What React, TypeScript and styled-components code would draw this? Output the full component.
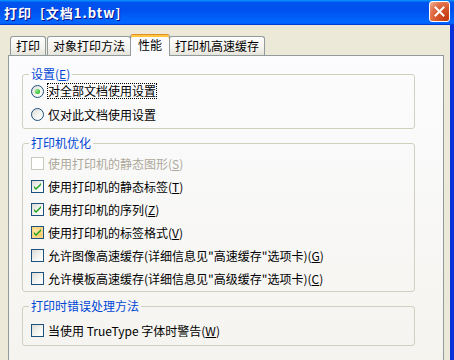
import * as React from "react";
import { FC } from "react";
import styled, { createGlobalStyle, css } from "styled-components";

const GlobalStyle = createGlobalStyle`
  html, body {
    margin: 0;
    padding: 0;
    background: #ece9d8;
  }
  body {
    font-family: "Noto Sans CJK SC", "Noto Sans", sans-serif;
    font-size: 12px;
    color: #000;
  }
`;

const Window = styled.div`
  width: 454px;
  height: 360px;
  overflow: hidden;
  background: #ece9d8;
  display: flex;
  flex-direction: column;
`;

const TitleBar = styled.div`
  height: 25px;
  flex-shrink: 0;
  display: flex;
  align-items: center;
  justify-content: space-between;
  padding: 0 4px 0 4px;
  background: linear-gradient(
    to bottom,
    #0997ff 0%,
    #0053ee 10%,
    #0050ee 40%,
    #0066ff 86%,
    #0066ff 92%,
    #005bff 95%,
    #003dd7 96%,
    #003dd7 100%
  );
`;

const Title = styled.div`
  color: #fff;
  font-weight: bold;
  font-size: 13px;
  letter-spacing: 1px;
  text-shadow: 1px 1px #0f1089;
  white-space: pre;
  margin-top: -1px;
`;

const CloseButton = styled.div`
  width: 19px;
  height: 19px;
  border: 1px solid #fff;
  border-radius: 3px;
  margin-top: -3px;
  display: flex;
  align-items: center;
  justify-content: center;
  background: radial-gradient(
    circle at 85% 85%,
    #c23a10 0%,
    #d9582c 45%,
    #e27650 70%,
    #f0ad92 95%
  );
`;

const Client = styled.div`
  flex: 1;
  border-right: 4px solid #0831d9;
  padding: 8px 6px 0 8px;
  display: flex;
  flex-direction: column;
`;

const TabStrip = styled.div`
  display: flex;
  align-items: flex-end;
  height: 23px;
  padding-left: 2px;
  position: relative;
  z-index: 1;
  margin-bottom: -1px;
`;

const Tab = styled.div<{ $active?: boolean }>`
  height: 18px;
  line-height: 18px;
  padding: 0 5px;
  border: 1px solid #919b9c;
  border-bottom: none;
  border-radius: 3px 3px 0 0;
  margin-right: 1px;
  white-space: nowrap;
  background: linear-gradient(to bottom, #fefefe 0%, #f4f3ee 60%, #e6e4da 100%);
  margin-bottom: 1px;
  ${(p) =>
    p.$active &&
    css`
      height: 21px;
      line-height: 20px;
      margin: 0 -1px 0 -2px;
      padding: 0 7px;
      background: #fcfcfe;
      border-top: 1px solid #e68b2c;
      box-shadow: inset 0 2px #ffc83c;
      margin-bottom: 0;
    `}
`;

const Panel = styled.div`
  height: 320px;
  border: 1px solid #919b9c;
  background: linear-gradient(to bottom, #fcfcfe 0%, #f4f3ee 100%);
  padding: 12px 0 0 13px;
  display: flex;
  flex-direction: column;
`;

const Group = styled.fieldset<{ $gap?: number }>`
  width: 385px;
  margin: 0 0 ${(p) => p.$gap ?? 0}px 0;
  padding: 0 0 0 6px;
  border: 1px solid #d0d0bf;
  border-radius: 3px;
  min-width: 0;
`;

const Legend = styled.legend`
  color: #0046d5;
  padding: 0 2px;
  line-height: 12px;
  height: 12px;
`;

const Items = styled.div<{ $top: number; $bottom: number }>`
  display: flex;
  flex-direction: column;
  gap: 3px;
  padding: ${(p) => p.$top}px 0 ${(p) => p.$bottom}px 2px;
`;

const Row = styled.label<{ $disabled?: boolean }>`
  display: flex;
  align-items: center;
  gap: 4px;
  height: 20px;
  white-space: nowrap;
  color: ${(p) => (p.$disabled ? "#aca899" : "#000")};
`;

const Box = styled.span<{ $hot?: boolean; $disabled?: boolean }>`
  width: 11px;
  height: 11px;
  flex-shrink: 0;
  border: 1px solid ${(p) => (p.$disabled ? "#cac8bb" : "#1c5180")};
  display: flex;
  align-items: center;
  justify-content: center;
  background: ${(p) =>
    p.$disabled
      ? "#fff"
      : "linear-gradient(135deg, #dcdcd7 0%, #f6f6f3 60%, #ffffff 100%)"};
  ${(p) =>
    p.$hot &&
    css`
      background: linear-gradient(135deg, #fff0cf 0%, #fbd783 60%, #f8b330 100%);
      box-shadow: inset 0 0 0 2px #fbd783;
    `}
`;

const Radio = styled.span`
  width: 11px;
  height: 11px;
  flex-shrink: 0;
  border: 1px solid #1c5180;
  border-radius: 50%;
  display: flex;
  align-items: center;
  justify-content: center;
  background: linear-gradient(135deg, #dcdcd7 0%, #f6f6f3 60%, #ffffff 100%);
`;

const Dot = styled.span`
  width: 5px;
  height: 5px;
  border-radius: 50%;
  background: radial-gradient(circle at 35% 35%, #a2e79f 0%, #55d551 40%, #21a121 100%);
`;

const Focus = styled.span`
  outline: 1px dotted #000;
  outline-offset: 0;
  line-height: 14px;
`;

const Check: FC = () => (
  <svg width="9" height="9" viewBox="0 0 9 9">
    <path d="M1 4 L3 6 L8 1 L8 3 L3 8 L1 6 Z" fill="#21a121" />
  </svg>
);

const Acc: FC<{ k: string }> = ({ k }) => (
  <>
    (<u>{k}</u>)
  </>
);

type CheckItem = {
  label: string;
  key: string;
  checked?: boolean;
  disabled?: boolean;
  hot?: boolean;
};

const optimizeItems: CheckItem[] = [
  { label: "使用打印机的静态图形", key: "S", disabled: true },
  { label: "使用打印机的静态标签", key: "T", checked: true },
  { label: "使用打印机的序列", key: "Z", checked: true },
  { label: "使用打印机的标签格式", key: "V", checked: true, hot: true },
  { label: '允许图像高速缓存(详细信息见"高速缓存"选项卡)', key: "G" },
  { label: '允许模板高速缓存(详细信息见"高级缓存"选项卡)', key: "C" },
];

const CheckRow: FC<{ item: CheckItem }> = ({ item }) => (
  <Row $disabled={item.disabled}>
    <Box $disabled={item.disabled} $hot={item.hot}>
      {item.checked && <Check />}
    </Box>
    <span>
      {item.label}
      <Acc k={item.key} />
    </span>
  </Row>
);

const App: FC = () => (
  <>
    <GlobalStyle />
    <Window>
      <TitleBar>
        <Title>打印  [文档1.btw]</Title>
        <CloseButton>
          <svg width="11" height="11" viewBox="0 0 11 11">
            <path d="M1.5 1.5 L9.5 9.5 M9.5 1.5 L1.5 9.5" stroke="#fff" strokeWidth="2" strokeLinecap="square" />
          </svg>
        </CloseButton>
      </TitleBar>
      <Client>
        <TabStrip>
          <Tab>打印</Tab>
          <Tab>对象打印方法</Tab>
          <Tab $active>性能</Tab>
          <Tab>打印机高速缓存</Tab>
        </TabStrip>
        <Panel>
          <Group $gap={8}>
            <Legend>
              设置<Acc k="E" />
            </Legend>
            <Items $top={1} $bottom={4}>
              <Row>
                <Radio>
                  <Dot />
                </Radio>
                <Focus>对全部文档使用设置</Focus>
              </Row>
              <Row>
                <Radio />
                <span>仅对此文档使用设置</span>
              </Row>
            </Items>
          </Group>
          <Group $gap={8}>
            <Legend>打印机优化</Legend>
            <Items $top={4} $bottom={3}>
              {optimizeItems.map((item) => (
                <CheckRow key={item.key} item={item} />
              ))}
            </Items>
          </Group>
          <Group>
            <Legend>打印时错误处理方法</Legend>
            <Items $top={8} $bottom={5}>
              <CheckRow item={{ label: "当使用 TrueType 字体时警告", key: "W" }} />
            </Items>
          </Group>
        </Panel>
      </Client>
    </Window>
  </>
);

export default App;
